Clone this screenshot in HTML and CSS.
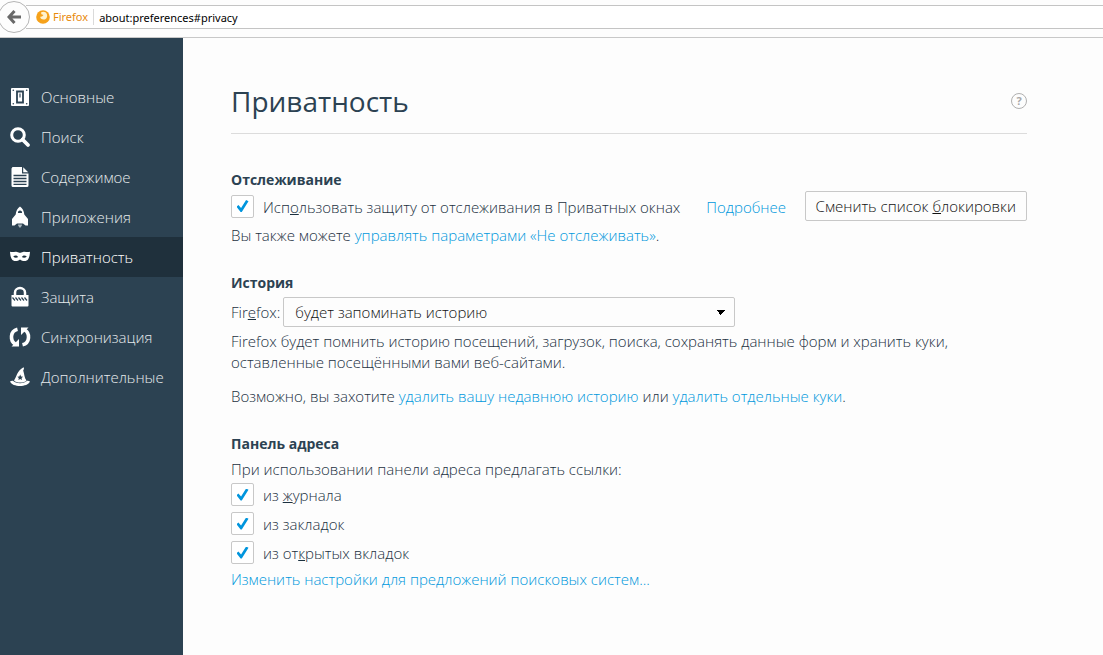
FILE: index.html
```html
<!DOCTYPE html>
<html lang="ru">
<head>
<meta charset="utf-8">
<title>Приватность</title>
<link rel="stylesheet" href="styles.css">
</head>
<body>
<header class="toolbar">
  <button class="back" type="button" aria-label="Назад">
    <svg width="14" height="14" viewBox="0 0 14 14" fill="none" stroke="#696969" stroke-width="3"><path d="M7.500 1 2 7l5.500 6M2.500 7H14"/></svg>
  </button>
  <div class="urlbar">
    <span class="identity">
      <svg width="14" height="14" viewBox="0 0 14 14"><circle cx="7" cy="7" r="6.800" fill="#f6a21b"/><path d="M5 2.500C7 1.300 10 1.800 10.800 4c1 2.600-.3 5.300-2.800 5.600-2.200.2-3.800-1-3.700-2.800L6 6.500 7.500 5 5.400 4.300z" fill="#fff3cf"/></svg>
      Firefox
    </span>
    <input class="address" type="text" aria-label="Адрес" value="about:preferences#privacy">
  </div>
</header>
<div class="layout">
  <nav class="sidebar">
    <a class="category" href="#general">
      <svg class="icon" viewBox="0 0 20 20"><path fill="#fff" d="M2 1h16a1 1 0 0 1 1 1v16a1 1 0 0 1-1 1H2a1 1 0 0 1-1-1V2a1 1 0 0 1 1-1z"/><path fill="none" stroke="#2c4252" stroke-width="1.800" d="M7 4.500h6v11H7z"/><path fill="#8b969f" d="M9 6.500h2v4H9z"/><g fill="#2c4252"><circle cx="3.300" cy="3.300" r=".8"/><circle cx="16.700" cy="3.300" r=".8"/><circle cx="3.300" cy="16.700" r=".8"/><circle cx="16.700" cy="16.700" r=".8"/></g></svg>
      Основные</a>
    <a class="category" href="#search">
      <svg class="icon" viewBox="0 0 20 20" fill="none" stroke="#fff"><circle cx="8" cy="8" r="6.300" stroke-width="3"/><path d="m12.500 12.500 5.500 5.500" stroke-width="3.800" stroke-linecap="round"/></svg>
      Поиск</a>
    <a class="category" href="#content">
      <svg class="icon" viewBox="0 0 20 20"><path fill="#fff" d="M2.500 0H12v6.500h6.500v12A1.500 1.500 0 0 1 17 20H3a1.500 1.500 0 0 1-1.500-1.500V1.500zM13.200.3l5 5h-5z"/><path stroke="#2c4252" stroke-width="1.300" d="M3.500 8.500h13M3.500 11.500h13M3.500 14.500h13M3.500 17.300h13"/></svg>
      Содержимое</a>
    <a class="category" href="#applications">
      <svg class="icon" viewBox="0 0 20 20"><path fill="#fff" fill-rule="evenodd" d="M10-.5c2.500 1.800 4 4.500 4.300 8L18 12v6.500h-2.500L13 16.500H7l-2.500 2H2V12l3.700-4.500c.3-3.500 1.800-6.200 4.300-8zm0 4A2 2 0 0 0 8 6h4a2 2 0 0 0-2-2.500z"/><path fill="#a9b5bd" d="M8 17.500h4c0 1.500-.8 2.200-2 3.500-1.200-1.300-2-2-2-3.500z"/></svg>
      Приложения</a>
    <a class="category selected" href="#privacy" aria-current="page">
      <svg class="icon" viewBox="0 0 20 20"><path fill="#fff" fill-rule="evenodd" d="M0 4.800c3 .9 4.500-.5 7 .1 1.500.3 2 .8 3 .8s1.500-.5 3-.8c2.500-.6 4 .8 7-.1-.2 2.500-.4 5-1.700 7.200-1.500 2.600-5.300 2.800-8.300.5-3 2.300-6.800 2.100-8.300-.5C.4 9.800.2 7.300 0 4.800zm3.200 4.800c1.500 1.500 3.500 1.600 5 .4-1-1.900-3.300-2.200-5-.4zm13.600 0c-1.500 1.500-3.500 1.600-5 .4 1-1.900 3.300-2.200 5-.4z"/></svg>
      Приватность</a>
    <a class="category" href="#security">
      <svg class="icon" viewBox="0 0 20 20"><path d="M5 9V5.500a5 4.500 0 0 1 10 0V9" fill="none" stroke="#fff" stroke-width="2.500"/><path fill="#fff" d="M1.500 8h17v10.500a1 1 0 0 1-1 1h-15a1 1 0 0 1-1-1z"/><path d="m2.500 10.500 2.500 3m.5-3 2.500 3m.5-3 2.500 3m.5-3 2.500 3m.5-3 2.500 3" fill="none" stroke="#2c4252" stroke-width="1.200"/></svg>
      Защита</a>
    <a class="category" href="#sync">
      <svg class="icon" viewBox="0 0 20 20" fill="none" stroke="#fff" stroke-width="3.600"><path d="M7.500 2.200C-.2 4 0 14 5.200 17M12.500 17.800C20.200 16 20 6 14.800 3"/><path fill="#fff" stroke="none" d="M1.500 19.500 9 12v7.500zM18.500.5 11 8V.5z"/></svg>
      Синхронизация</a>
    <a class="category" href="#advanced">
      <svg class="icon" viewBox="0 0 20 20"><path fill="#fff" d="M4 13.500C6.500 10 7 3.500 13.500.2c.8.700.5 2-.3 3.300 1.200 3.500 1.200 7.500 3.300 10-2 2.700-10.500 2.700-12.500 0z"/><path fill="#fff" d="M0 14.500c1-.8 2-1 3-.7 2.500 3.300 11.500 3.300 14 0 1-.3 2-.1 3 .7-2.500 6-17.500 6-20 0z"/><path fill="#2c4252" d="m10.200 7.600.9 1.900 2 .2-1.500 1.400.4 2-1.800-1-1.800 1 .4-2-1.500-1.400 2-.2z"/></svg>
      Дополнительные</a>
  </nav>
  <main class="main">
    <div class="content">
      <header class="page-header">
        <h1 class="title">Приватность</h1>
        <button class="help" type="button" aria-label="Справка">?</button>
      </header>

      <section class="group">
        <h2 class="caption">Отслеживание</h2>
        <div class="row">
          <label class="check-label"><input class="check" type="checkbox" checked><span class="label-text">Исп<u>о</u>льзовать защиту от отслеживания в Приватных окнах</span></label>
          <a class="link more label-text" href="#more">Подробнее</a>
          <button class="button" type="button">Сменить список <u>б</u>локировки</button>
        </div>
        <p class="text">Вы также можете <a class="link" href="#dnt">управлять параметрами «Не отслеживать»</a>.</p>
      </section>

      <section class="group">
        <h2 class="caption">История</h2>
        <div class="row history">
          <label for="history-mode">Fir<u>e</u>fox:</label>
          <select class="select" id="history-mode"><option>будет запоминать историю</option></select>
        </div>
        <p class="text">Firefox будет помнить историю посещений, загрузок, поиска, сохранять данные форм и хранить куки, оставленные посещёнными вами веб-сайтами.</p>
        <p class="text spaced">Возможно, вы захотите <a class="link" href="#clear">удалить вашу недавнюю историю</a> или <a class="link" href="#cookies">удалить отдельные куки</a>.</p>
      </section>

      <section class="group">
        <h2 class="caption">Панель адреса</h2>
        <p class="text">При использовании панели адреса предлагать ссылки:</p>
        <label class="check-label option"><input class="check" type="checkbox" checked><span class="label-text">из <u>ж</u>урнала</span></label>
        <label class="check-label option"><input class="check" type="checkbox" checked><span class="label-text">из закла<u>д</u>ок</span></label>
        <label class="check-label option"><input class="check" type="checkbox" checked><span class="label-text">из от<u>к</u>рытых вкладок</span></label>
        <p class="footer-link"><a class="link" href="#suggestions">Изменить настройки для предложений поисковых систем...</a></p>
      </section>
    </div>
  </main>
</div>
</body>
</html>
```
FILE: styles.css
```css
* { box-sizing: border-box; }

body {
  margin: 0;
  min-height: 100vh;
  display: flex;
  flex-direction: column;
  background: #fdfdfd;
  color: #1b303f;
  font: 300 15px/21px "Open Sans", "Noto Sans", sans-serif;
}

button, input, select { font: inherit; color: inherit; }
h1, h2, p { margin: 0; }

.toolbar {
  display: flex;
  align-items: center;
  height: 38px;
  padding-bottom: 4px;
  border-bottom: 1px solid #c8c8c8;
}

.back {
  display: flex;
  align-items: center;
  justify-content: center;
  flex: none;
  width: 32px;
  height: 32px;
  margin-left: -2px;
  padding: 0;
  border: 1px solid #b5b5b5;
  border-radius: 50%;
  background: #fdfdfd;
  z-index: 1;
}

.urlbar {
  display: flex;
  align-items: center;
  flex: 1;
  height: 24px;
  margin-left: -4px;
  padding-left: 10px;
  border: solid #c4c4c4;
  border-width: 1px 0;
  background: #fff;
  font: 11px/16px "Noto Sans", sans-serif;
}

.identity {
  display: flex;
  align-items: center;
  gap: 3px;
  padding-right: 5px;
  border-right: 1px solid #dadada;
  color: #e88a0c;
}

.address {
  flex: 1;
  min-width: 0;
  padding: 2px 5px 0;
  border: 0;
  outline: 0;
  background: none;
  color: #000;
}

.layout { display: flex; flex: 1; }

.sidebar {
  flex: none;
  width: 183px;
  padding-top: 39px;
  background: #2c4252;
}

.category {
  display: flex;
  align-items: center;
  gap: 11px;
  height: 40px;
  padding-left: 10px;
  color: #e6eaec;
  text-decoration: none;
}

.selected { background: #1f303c; color: #fff; }
.icon { flex: none; width: 20px; height: 20px; overflow: visible; }

.main { flex: 1; padding: 43px 48px 24px; }
.content { max-width: 796px; }

.page-header {
  display: flex;
  align-items: center;
  justify-content: space-between;
  padding-bottom: 12px;
  margin-bottom: 35px;
  border-bottom: 1px solid #dcdcdc;
}

.title { color: #2c4252; font-size: 28px; font-weight: 400; line-height: 40px; }

.help {
  width: 16px;
  height: 16px;
  padding: 0;
  border: 1px solid #b0b0b0;
  border-radius: 50%;
  background: none;
  color: #a8a8a8;
  font-size: 11px;
  font-weight: 700;
  line-height: 14px;
}

.group { margin-bottom: 26px; }
.caption { color: #2c4252; font-size: 14px; font-weight: 700; line-height: 22px; }
.row { display: flex; align-items: center; min-height: 30px; }
.more { margin-left: 26px; }
.link { color: #0098dc; text-decoration: none; }
.text { margin-top: 4px; }
.spaced { margin-top: 13px; }
.label-text { padding-top: 2px; }
.footer-link { margin-top: 2px; }

.button {
  height: 30px;
  margin-left: auto;
  padding: 0 10px;
  border: 1px solid #c8c8c8;
  border-radius: 2px;
  background: #fdfdfd;
  color: #111;
  white-space: nowrap;
}

.history { gap: 3px; margin-top: 3px; }

.select {
  appearance: none;
  width: 452px;
  height: 30px;
  padding: 0 30px 0 11px;
  border: 1px solid #c8c8c8;
  border-radius: 2px;
  background:
    linear-gradient(to top right, transparent 50%, #000 50%) right 13px center / 5px 5px no-repeat,
    linear-gradient(to top left, transparent 50%, #000 50%) right 8px center / 5px 5px no-repeat,
    #fdfdfd;
  color: #111;
}

.check-label { display: flex; align-items: center; gap: 9px; }
.option { height: 29px; }

.check {
  appearance: none;
  display: grid;
  place-items: center;
  flex: none;
  width: 23px;
  height: 23px;
  margin: 0;
  border: 1px solid #c8c8c8;
  border-radius: 2px;
  background: #fff;
}

.check:checked::before {
  content: "";
  width: 12px;
  height: 12px;
  background: #0095dd;
  clip-path: polygon(0 56%, 16% 42%, 38% 66%, 80% 0, 100% 10%, 44% 100%, 34% 100%);
}
```
